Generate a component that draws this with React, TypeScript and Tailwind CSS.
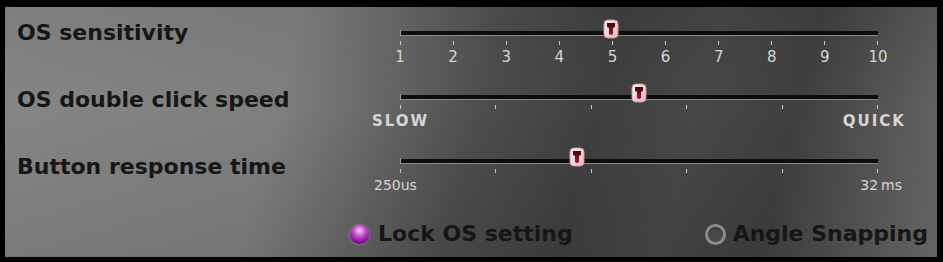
import type { ReactNode } from 'react';

// Ползунок в стиле старой утилиты мыши
function Thumb({ className }: { className: string }) {
  return (
    <svg
      width="16"
      height="20"
      viewBox="0 0 16 20"
      className={`absolute -top-[12px] ${className}`}
    >
      <defs>
        <linearGradient id="thumbBody" x1="0" y1="0" x2="1" y2="1">
          <stop offset="0" stopColor="#fdf3f5" />
          <stop offset="1" stopColor="#e2b9c1" />
        </linearGradient>
        <linearGradient id="thumbCore" x1="0" y1="0" x2="0" y2="1">
          <stop offset="0" stopColor="#3e050c" />
          <stop offset="1" stopColor="#a3172a" />
        </linearGradient>
      </defs>
      <rect x="1" y="1" width="14" height="18" rx="4" fill="url(#thumbBody)" stroke="#d88f9f" strokeWidth="1" />
      <path d="M4 4 H12 V8 L10 9 V15 Q8 17 6 15 V9 L4 8 Z" fill="url(#thumbCore)" />
    </svg>
  );
}

function Slider({
  ticks,
  thumb,
  labels,
}: {
  ticks: number;
  thumb: string;
  labels: ReactNode;
}) {
  return (
    <div className="h-[64px] pt-[24px]">
      <div className="relative h-[4px] bg-[#0d0d0d] rounded-l-[1px] shadow-[0_1px_0_#8a8a8a]">
        <div className="absolute left-0 -top-[1px] w-[1px] h-[6px] bg-[#9a9a9a]" />
        <Thumb className={thumb} />
      </div>
      <div className="mt-[6px] flex justify-between">
        {Array.from({ length: ticks }).map((_, i) => (
          <div key={i} className="w-[1px] h-[4px] bg-[#c8c8c8]" />
        ))}
      </div>
      <div className="mt-[4px] h-[16px] leading-[16px] text-[#d6d6d6]">{labels}</div>
    </div>
  );
}

export default function App() {
  return (
    <div className="w-[943px] h-[262px] bg-black pt-[7px] pl-[5px] font-['DejaVu_Sans',sans-serif]">
      <div className="w-[932px] h-[250px] flex flex-col bg-[linear-gradient(180deg,rgba(0,0,0,0.06)_0%,rgba(0,0,0,0)_40%,rgba(0,0,0,0.08)_100%),linear-gradient(105deg,#868686_0%,#7f7f7f_30%,#6c6c6c_38%,#4e4e4e_50%,#3f3f3f_62%,#474747_72%,#3f3f3f_82%,#5a5a5a_93%,#6c6c6c_100%)]">
        <div className="flex">
          {/* Подписи слева */}
          <div className="w-[395px] pl-[12px] pt-[13px] flex flex-col gap-[41px] text-[22px] leading-[26px] font-bold text-[#161616]">
            <div>OS sensitivity</div>
            <div>OS double click speed</div>
            <div>Button response time</div>
          </div>

          {/* Ползунки */}
          <div className="w-[478px] flex flex-col">
            <Slider
              ticks={10}
              thumb="left-[203px]"
              labels={
                <div className="-mx-[10px] flex justify-between text-[15px]">
                  {['1', '2', '3', '4', '5', '6', '7', '8', '9', '10'].map((n) => (
                    <span key={n} className="w-[20px] text-center">
                      {n}
                    </span>
                  ))}
                </div>
              }
            />
            <Slider
              ticks={6}
              thumb="left-[231px]"
              labels={
                <div className="-mx-[28px] flex justify-between text-[15px] font-bold tracking-[2px]">
                  <span>SLOW</span>
                  <span>QUICK</span>
                </div>
              }
            />
            <Slider
              ticks={6}
              thumb="left-[169px]"
              labels={
                <div className="-ml-[26px] -mr-[24px] flex justify-between text-[14px]">
                  <span>250us</span>
                  <span>
                    32<span className="ml-[3px]">ms</span>
                  </span>
                </div>
              }
            />
          </div>
        </div>

        {/* Переключатели */}
        <div className="mt-[22px] ml-[345px] mr-[9px] flex justify-between items-center text-[22px] leading-[26px] font-bold text-[#161616]">
          <div className="flex items-center gap-[9px]">
            <div className="w-[19px] h-[19px] rounded-full bg-[radial-gradient(circle_at_50%_30%,#f8c8f8_0%,#c040c8_40%,#7a0a86_75%,#4a0050_100%)] shadow-[0_0_3px_#d070d8]" />
            <span>Lock OS setting</span>
          </div>
          <div className="flex items-center gap-[7px]">
            <div className="w-[21px] h-[21px] rounded-full border-[3px] border-[#8c8c8c] bg-[#4a4a4a] shadow-[inset_0_1px_2px_#222]" />
            <span>Angle Snapping</span>
          </div>
        </div>
      </div>
    </div>
  );
}
